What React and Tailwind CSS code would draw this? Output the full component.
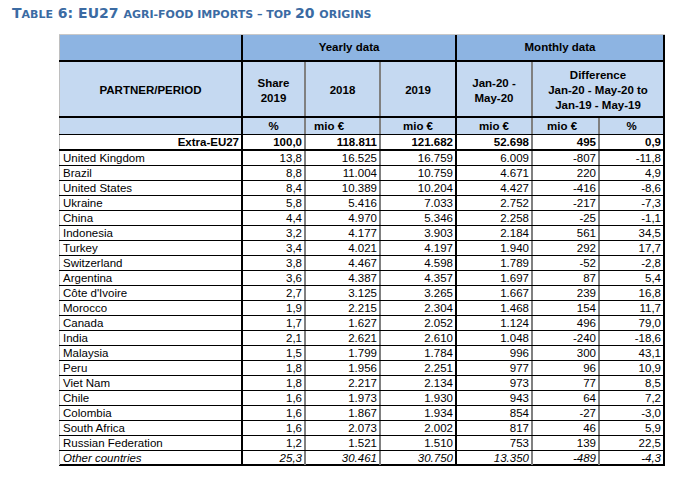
import React from 'react';

const rows = [
  ['United Kingdom', '13,8', '16.525', '16.759', '6.009', '-807', '-11,8'],
  ['Brazil', '8,8', '11.004', '10.759', '4.671', '220', '4,9'],
  ['United States', '8,4', '10.389', '10.204', '4.427', '-416', '-8,6'],
  ['Ukraine', '5,8', '5.416', '7.033', '2.752', '-217', '-7,3'],
  ['China', '4,4', '4.970', '5.346', '2.258', '-25', '-1,1'],
  ['Indonesia', '3,2', '4.177', '3.903', '2.184', '561', '34,5'],
  ['Turkey', '3,4', '4.021', '4.197', '1.940', '292', '17,7'],
  ['Switzerland', '3,8', '4.467', '4.598', '1.789', '-52', '-2,8'],
  ['Argentina', '3,6', '4.387', '4.357', '1.697', '87', '5,4'],
  ["Côte d'Ivoire", '2,7', '3.125', '3.265', '1.667', '239', '16,8'],
  ['Morocco', '1,9', '2.215', '2.304', '1.468', '154', '11,7'],
  ['Canada', '1,7', '1.627', '2.052', '1.124', '496', '79,0'],
  ['India', '2,1', '2.621', '2.610', '1.048', '-240', '-18,6'],
  ['Malaysia', '1,5', '1.799', '1.784', '996', '300', '43,1'],
  ['Peru', '1,8', '1.956', '2.251', '977', '96', '10,9'],
  ['Viet Nam', '1,8', '2.217', '2.134', '973', '77', '8,5'],
  ['Chile', '1,6', '1.973', '1.930', '943', '64', '7,2'],
  ['Colombia', '1,6', '1.867', '1.934', '854', '-27', '-3,0'],
  ['South Africa', '1,6', '2.073', '2.002', '817', '46', '5,9'],
  ['Russian Federation', '1,2', '1.521', '1.510', '753', '139', '22,5'],
];

const cols = 'grid grid-cols-[184px_63px_75px_76px_76px_67px_65px]';

// vertical rules per column: black after partner, 2019 and the last column; grey elsewhere
const colBorder = [
  'border-l border-l-[#bfbfbf] border-r-2 border-r-black',
  'border-r-2 border-r-[#808080]',
  'border-r-2 border-r-[#808080]',
  'border-r-2 border-r-black',
  'border-r-2 border-r-[#808080]',
  'border-r-2 border-r-[#808080]',
  'border-r-2 border-r-black',
];

function DataRow({ cells, bold, italic, last }) {
  return (
    <div
      className={`${cols} h-[15px] ${last ? 'border-b-2' : 'border-b'} border-black ${bold ? 'font-bold' : ''} ${italic ? 'italic' : ''}`}
    >
      {cells.map((c, i) => (
        <div
          key={i}
          className={`${colBorder[i]} flex items-center leading-none pt-[2px] ${
            i === 0 ? (bold ? 'justify-end pr-[2px]' : 'pl-[3px]') : 'justify-end pr-[2px]'
          }`}
        >
          {c}
        </div>
      ))}
    </div>
  );
}

export default function App() {
  return (
    <div className="w-[696px] h-[480px] bg-white overflow-hidden font-['Liberation_Sans',Arial,sans-serif] text-black">
      <div className="pl-[12px] pt-[5px] h-[34px] font-['DejaVu_Sans',Verdana,sans-serif] font-bold text-[#3b6ba3] leading-none">
        <span className="text-[14px]">T</span>
        <span className="text-[11px]">ABLE</span>
        <span className="text-[14px]"> 6: EU27 </span>
        <span className="text-[11px]">AGRI-FOOD IMPORTS – TOP </span>
        <span className="text-[14px]">20 </span>
        <span className="text-[11px]">ORIGINS</span>
      </div>

      <div className="ml-[59px] w-[606px] text-[11.5px]">
        {/* group header */}
        <div className="grid grid-cols-[184px_214px_208px] h-[28px] bg-[#8db4e2] border-t border-t-[#c8c8c8] border-b-2 border-b-black font-bold">
          <div className="border-l border-l-[#bfbfbf] border-r-2 border-r-black" />
          <div className="border-r-2 border-r-black flex items-center justify-center pt-[1px]">Yearly data</div>
          <div className="border-r-2 border-r-black flex items-center justify-center pt-[1px]">Monthly data</div>
        </div>

        {/* column titles */}
        <div className="grid grid-cols-[184px_63px_75px_76px_76px_132px] h-[56px] bg-[#c5d9f1] border-b-2 border-black font-bold leading-[15px] text-center">
          <div className="border-l border-l-[#bfbfbf] border-r-2 border-r-black flex items-center justify-center pt-[3px]">
            PARTNER/PERIOD
          </div>
          <div className="border-r-2 border-r-[#808080] flex items-center justify-center pt-[3px]">
            Share
            <br />
            2019
          </div>
          <div className="border-r-2 border-r-[#808080] flex items-center justify-center pt-[3px]">2018</div>
          <div className="border-r-2 border-r-black flex items-center justify-center pt-[3px]">2019</div>
          <div className="border-r-2 border-r-[#808080] flex items-center justify-center pt-[3px]">
            Jan-20 -
            <br />
            May-20
          </div>
          <div className="border-r-2 border-r-black flex items-center justify-center pt-[2px]">
            Difference
            <br />
            Jan-20 - May-20 to
            <br />
            Jan-19 - May-19
          </div>
        </div>

        {/* units */}
        <div className={`${cols} h-[17px] bg-[#c5d9f1] border-b border-black font-bold leading-none`}>
          <div className={colBorder[0]} />
          <div className={`${colBorder[1]} flex items-center justify-center pt-[2px]`}>%</div>
          <div className={`${colBorder[2]} flex items-center pl-[8px] pt-[2px]`}>mio €</div>
          <div className={`${colBorder[3]} flex items-center justify-center pt-[2px]`}>mio €</div>
          <div className={`${colBorder[4]} flex items-center justify-center pt-[2px]`}>mio €</div>
          <div className={`${colBorder[5]} flex items-center pl-[14px] pt-[2px]`}>mio €</div>
          <div className={`${colBorder[6]} flex items-center justify-center pt-[2px]`}>%</div>
        </div>

        <div className="border-b border-black">
          <DataRow cells={['Extra-EU27', '100,0', '118.811', '121.682', '52.698', '495', '0,9']} bold />
        </div>

        {rows.map((r) => (
          <DataRow key={r[0]} cells={r} />
        ))}
        <DataRow cells={['Other countries', '25,3', '30.461', '30.750', '13.350', '-489', '-4,3']} italic last />
      </div>
    </div>
  );
}
